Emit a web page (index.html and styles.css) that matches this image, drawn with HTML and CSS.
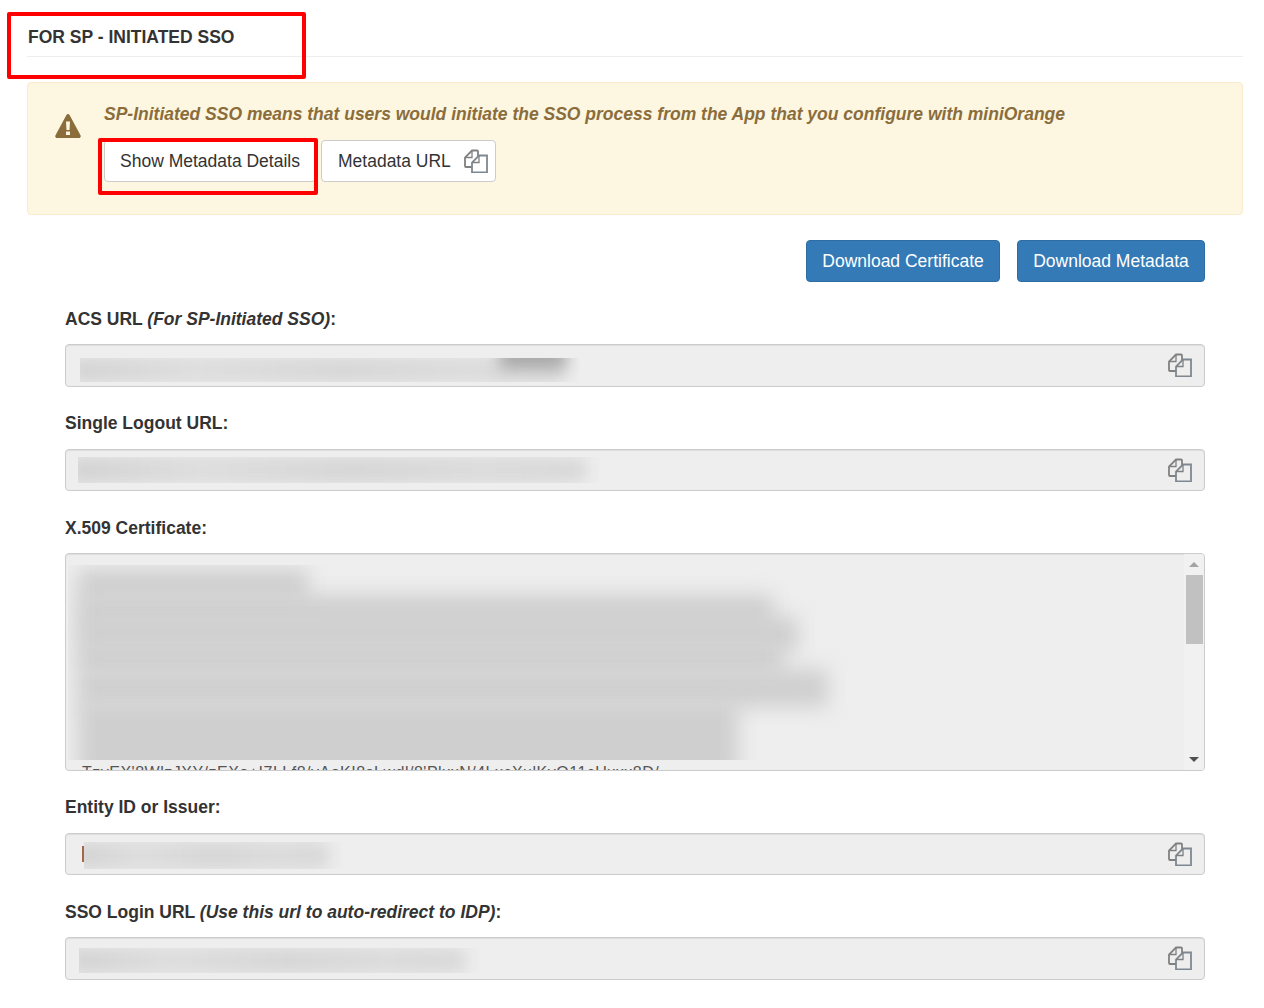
FILE: index.html
```html
<!DOCTYPE html>
<html lang="en">
<head>
    <meta charset="UTF-8">
    <meta name="viewport" content="width=device-width, initial-scale=1.0">
    <title>SP-Initiated SSO</title>
    <link rel="stylesheet" href="styles.css">
</head>
<body>
    <svg class="sprite" width="0" height="0" aria-hidden="true">
        <symbol id="copy" viewBox="0 0 24 24">
            <path d="M14 7V2.500c0-.6-.4-1-1-1H8L1 8.500V17c0 .6.400 1 1 1h6" fill="none" stroke="#808080" stroke-width="1.800"/>
            <path d="M8 1.500V8.500H1" fill="none" stroke="#808080" stroke-width="1.300"/>
            <path d="M15 6.500h8v17H8V13.500z" fill="none" stroke="#7f8790" stroke-width="1.800"/>
            <path d="M15 6.500V13.500H8" fill="none" stroke="#808080" stroke-width="1.300"/>
        </symbol>
    </svg>

    <div class="page">
        <h1 class="title">FOR SP - INITIATED SSO</h1>
        <div class="mark mark-title"></div>

        <div class="alert">
            <svg class="alert-icon" viewBox="0 0 26 24" aria-hidden="true">
                <path fill-rule="evenodd" d="M11.300 1.200c.8-1.500 2.600-1.500 3.400 0l10.800 20c.7 1.400-.2 2.800-1.700 2.800H2.200C.7 24-.2 22.600.5 21.200zM11 7.500l.5 8.500h3l.5-8.500zM11 17.500v3.500h4v-3.500z"/>
            </svg>
            <div class="alert-body">
                <p class="alert-text">SP-Initiated SSO means that users would initiate the SSO process from the App that you configure with miniOrange</p>
                <div class="alert-actions">
                    <button class="btn btn-show" type="button">Show Metadata Details</button>
                    <button class="btn btn-url" type="button">Metadata URL<svg class="copy-small"><use href="#copy"/></svg></button>
                    <div class="mark mark-show"></div>
                </div>
            </div>
        </div>

        <div class="downloads">
            <button class="btn btn-primary btn-cert" type="button">Download Certificate</button>
            <button class="btn btn-primary btn-meta" type="button">Download Metadata</button>
        </div>

        <form class="fields">
            <div class="field">
                <label>ACS URL <em>(For SP-Initiated SSO)</em>:</label>
                <div class="input">
                    <div class="patch patch-acs"><span class="smudge"></span><span class="smudge smudge-dark"></span></div>
                    <svg class="copy"><use href="#copy"/></svg>
                </div>
            </div>
            <div class="field">
                <label>Single Logout URL:</label>
                <div class="input">
                    <div class="patch patch-logout"><span class="smudge"></span></div>
                    <svg class="copy"><use href="#copy"/></svg>
                </div>
            </div>
            <div class="field">
                <label>X.509 Certificate:</label>
                <div class="textarea">
                    <div class="cert">
                        <div class="patch patch-cert">
                            <span class="cert-line line-1"></span>
                            <span class="cert-line line-2"></span>
                            <span class="cert-line line-3"></span>
                            <span class="cert-line line-4"></span>
                            <span class="cert-line line-5"></span>
                            <span class="cert-line line-6"></span>
                        </div>
                        <div class="cert-tail">TzvEX'8WlzJXY/zEXo+I7LLf8/vAoKI8sLwdl/8'PlxxN/4LxcXulKvO11cUxxx8D/</div>
                    </div>
                    <div class="scrollbar">
                        <span class="arrow arrow-up"></span>
                        <span class="thumb"></span>
                        <span class="arrow arrow-down"></span>
                    </div>
                </div>
            </div>
            <div class="field">
                <label>Entity ID or Issuer:</label>
                <div class="input">
                    <span class="caret-mark"></span>
                    <div class="patch patch-entity"><span class="smudge"></span></div>
                    <svg class="copy"><use href="#copy"/></svg>
                </div>
            </div>
            <div class="field">
                <label>SSO Login URL <em>(Use this url to auto-redirect to IDP)</em>:</label>
                <div class="input">
                    <div class="patch patch-login"><span class="smudge"></span></div>
                    <svg class="copy"><use href="#copy"/></svg>
                </div>
            </div>
        </form>
    </div>
</body>
</html>
```

FILE: styles.css
```css
* {
    box-sizing: border-box;
}

body {
    margin: 0;
    background-color: #fff;
    color: #333;
    font-family: "Liberation Sans", Arial, sans-serif;
    font-size: 17.500px;
}

.sprite {
    position: absolute;
}

.page {
    position: relative;
    height: 1008px;
    overflow: hidden;
    padding: 0 21px 0 27px;
}

.title {
    margin: 0;
    height: 57px;
    padding: 25px 0 0 1px;
    border-bottom: 1px solid #eee;
    font-size: 17.500px;
    line-height: 24px;
    font-weight: bold;
}

/* red boxes drawn over the screenshot */
.mark {
    position: absolute;
    border: 4px solid #f00;
    border-radius: 2px;
    pointer-events: none;
}

.mark-title {
    left: 7px;
    top: 12px;
    width: 299px;
    height: 67px;
}

.mark-show {
    left: -6px;
    top: -2px;
    width: 220px;
    height: 57px;
}

.alert {
    display: flex;
    height: 133px;
    margin-top: 25px;
    padding: 20px 27px 0;
    background-color: #fdf6e1;
    border: 1px solid #faebcc;
    border-radius: 4px;
    color: #8a6d3b;
}

.alert-icon {
    width: 26px;
    height: 24px;
    margin-top: 11px;
    margin-right: 23px;
    fill: #8a6d3b;
    flex: none;
}

.alert-text {
    margin: 0;
    line-height: 22px;
    font-weight: bold;
    font-style: italic;
}

.alert-actions {
    position: relative;
    display: flex;
    gap: 5px;
    margin-top: 15px;
}

.btn {
    display: inline-flex;
    align-items: center;
    justify-content: center;
    height: 42px;
    padding: 0 16px;
    background-color: #fff;
    border: 1px solid #ccc;
    border-radius: 4px;
    color: #333;
    font-family: inherit;
    font-size: 17.500px;
    white-space: nowrap;
}

.btn-show {
    width: 212px;
}

.btn-url {
    justify-content: flex-start;
    width: 175px;
}

.copy-small {
    flex: none;
    width: 24px;
    height: 24px;
    margin-left: 13px;
}

.downloads {
    display: flex;
    justify-content: flex-end;
    gap: 17px;
    margin-top: 25px;
    padding-right: 38px;
}

.btn-primary {
    background-color: #337ab7;
    border-color: #2e6da4;
    color: #fff;
}

.btn-cert {
    width: 194px;
}

.btn-meta {
    width: 188px;
}

.fields {
    margin-top: 24.500px;
    padding: 0 38px;
}

.field {
    margin-bottom: 24.500px;
}

.field label {
    display: block;
    height: 37.500px;
    line-height: 25px;
    font-weight: bold;
}

.field em {
    font-style: italic;
}

.input {
    position: relative;
    height: 42.500px;
    background-color: #eee;
    border: 1px solid #ccc;
    border-radius: 4px;
    box-shadow: inset 0 1px 1px rgba(0, 0, 0, .075);
}

.copy {
    position: absolute;
    right: 12px;
    top: 8px;
    width: 24px;
    height: 24px;
}

.patch {
    position: absolute;
    overflow: hidden;
    background: linear-gradient(to right, #e8e8e8 85%, #eee);
}

.smudge {
    position: absolute;
    left: -8px;
    right: 16px;
    top: 2px;
    bottom: 2px;
    background: linear-gradient(to right, #d0d0d0, #dcdcdc 25%, #d4d4d4 55%, #dadada 80%, #d6d6d6);
    filter: blur(8px);
}

.smudge-dark {
    left: 420px;
    right: 14px;
    top: -12px;
    bottom: 14px;
    background: #a4a4a4;
}

.patch-acs {
    left: 14px;
    top: 13px;
    width: 500px;
    height: 24px;
}

.patch-logout {
    left: 12px;
    top: 7px;
    width: 524px;
    height: 26px;
}

.patch-entity {
    left: 18px;
    top: 8px;
    width: 260px;
    height: 27px;
}

.patch-login {
    left: 13px;
    top: 10px;
    width: 402px;
    height: 25px;
}

.caret-mark {
    position: absolute;
    left: 16px;
    top: 12px;
    width: 2px;
    height: 16px;
    background-color: #a1694a;
}

.textarea {
    display: flex;
    height: 217.500px;
    background-color: #eee;
    border: 1px solid #ccc;
    border-radius: 4px;
    box-shadow: inset 0 1px 1px rgba(0, 0, 0, .075);
    overflow: hidden;
}

.cert {
    position: relative;
    flex: 1;
    overflow: hidden;
}

.patch-cert {
    left: 2px;
    top: 11px;
    width: 790px;
    height: 195px;
    background: none;
}

.cert-line {
    position: absolute;
    left: 10px;
    height: 34px;
    background-color: #cfcfcf;
    filter: blur(10px);
}

.line-1 { top: 4px; width: 230px; }
.line-2 { top: 30px; width: 695px; }
.line-3 { top: 52px; width: 720px; }
.line-4 { top: 76px; width: 705px; }
.line-5 { top: 104px; width: 750px; height: 38px; }
.line-6 { top: 136px; width: 660px; height: 80px; }

.cert-tail {
    position: absolute;
    left: 16px;
    top: 208px;
    font-size: 16px;
    line-height: 22px;
    letter-spacing: .5px;
    color: #555;
    white-space: nowrap;
}

.scrollbar {
    display: flex;
    flex-direction: column;
    align-items: center;
    width: 20px;
    background-color: #f1f1f1;
}

.arrow {
    width: 0;
    height: 0;
    border-left: 5px solid transparent;
    border-right: 5px solid transparent;
}

.arrow-up {
    margin-top: 8px;
    border-bottom: 5px solid #a3a3a3;
}

.thumb {
    width: 17px;
    height: 69px;
    margin-top: 8px;
    background-color: #c1c1c1;
}

.arrow-down {
    margin-top: auto;
    margin-bottom: 8px;
    border-top: 5px solid #505050;
}
```
